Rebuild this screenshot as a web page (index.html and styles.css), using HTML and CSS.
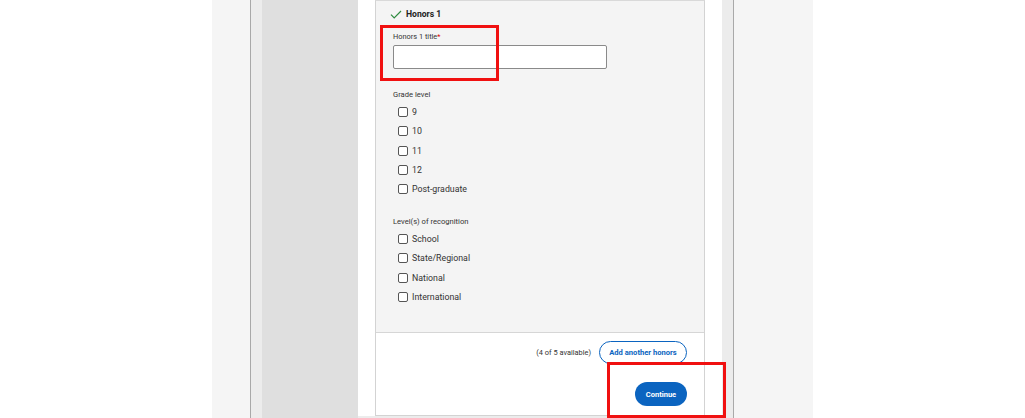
FILE: index.html
```html
<!DOCTYPE html>
<html>
<head>
<meta charset="utf-8">
<link rel="stylesheet" href="styles.css">
</head>
<body>
<div class="page">
  <div class="col margin-l"></div>
  <div class="col gutter-l"></div>
  <div class="col vline"></div>
  <div class="col band-l"></div>
  <div class="col side"></div>
  <div class="col main">
    <div class="panel">
      <div class="panel-body">
        <div class="panel-head">
          <svg class="check" width="12" height="9" viewBox="0 0 12 9"><path d="M1 4.6 L4.2 7.8 L11 1" fill="none" stroke="#2e8b3f" stroke-width="1.2"/></svg>
          <span>Honors 1</span>
        </div>
        <div class="field-label">Honors 1 title<span class="req">*</span></div>
        <div class="text-input"></div>
        <div class="group-label first-group">Grade level</div>
        <div class="options">
          <div class="opt"><span class="box"></span><span>9</span></div>
          <div class="opt"><span class="box"></span><span>10</span></div>
          <div class="opt"><span class="box"></span><span>11</span></div>
          <div class="opt"><span class="box"></span><span>12</span></div>
          <div class="opt"><span class="box"></span><span>Post-graduate</span></div>
        </div>
        <div class="group-label second-group">Level(s) of recognition</div>
        <div class="options">
          <div class="opt"><span class="box"></span><span>School</span></div>
          <div class="opt"><span class="box"></span><span>State/Regional</span></div>
          <div class="opt"><span class="box"></span><span>National</span></div>
          <div class="opt"><span class="box"></span><span>International</span></div>
        </div>
      </div>
      <div class="panel-foot">
        <div class="foot-row">
          <span class="avail">(4 of 5 available)</span>
          <span class="btn-outline">Add another honors</span>
        </div>
        <div class="foot-row continue-row">
          <span class="btn-fill">Continue</span>
        </div>
      </div>
    </div>
    <div class="below"></div>
  </div>
  <div class="col band-r"></div>
  <div class="col vline"></div>
  <div class="col gutter-r"></div>
  <div class="col margin-r"></div>

  <div class="mark mark-title"></div>
  <div class="mark mark-continue"></div>
</div>
</body>
</html>
```

FILE: styles.css
```css
* { box-sizing: border-box; }
html, body { margin: 0; padding: 0; background: #fff; }
body { font-family: Roboto, "Liberation Sans", Arial, sans-serif; color: #222; }

.page {
  position: relative;
  display: flex;
  width: 1025px;
  height: 418px;
  overflow: hidden;
}
.col { height: 100%; flex: none; }
.margin-l { width: 212px; background: #fff; }
.gutter-l { width: 38px; background: #f5f5f5; }
.vline { width: 1px; background: #a9a9a9; }
.band-l { width: 11px; background: #ececec; }
.side { width: 96px; background: #dfdfdf; }
.main {
  width: 364px;
  background: #fff;
  padding: 0 17px;
  display: flex;
  flex-direction: column;
}
.band-r { width: 11px; background: #ececec; }
.gutter-r { width: 79px; background: #f5f5f5; }
.margin-r { flex: 1; background: #fff; }

.panel {
  width: 330px;
  border: 1px solid #d3d3d3;
  border-top-color: #d9d9d9;
  display: flex;
  flex-direction: column;
}
.panel-body {
  height: 331px;
  background: #f4f4f4;
  padding: 7px 0 0 17px;
  display: flex;
  flex-direction: column;
}
.panel-head {
  display: flex;
  align-items: center;
  height: 12px;
  font-size: 8.6px;
  font-weight: 700;
  color: #222;
}
.check { margin-left: -3px; margin-right: 4px; }
.field-label {
  margin-top: 12px;
  height: 10px;
  line-height: 10px;
  font-size: 7.4px;
  color: #333;
}
.req { color: #d00; }
.text-input {
  margin-top: 3px;
  width: 214px;
  height: 24px;
  background: #fff;
  border: 1px solid #8a8a8a;
  border-radius: 2px;
}
.group-label {
  height: 10px;
  line-height: 10px;
  font-size: 7.6px;
  color: #333;
}
.first-group { margin-top: 21px; }
.second-group { margin-top: 18.4px; }
.options { margin-top: 2.4px; padding-left: 5px; }
.opt {
  display: flex;
  align-items: center;
  height: 19.25px;
  font-size: 8.8px;
  color: #333;
}
.box {
  width: 10px;
  height: 10px;
  border: 1px solid #555;
  border-radius: 2px;
  background: #fff;
  margin-right: 4px;
  flex: none;
}

.panel-foot {
  flex: 1;
  background: #fff;
  border-top: 1px solid #d6d6d6;
  padding: 8px 17px 9px 0;
  display: flex;
  flex-direction: column;
  align-items: flex-end;
}
.foot-row {
  display: flex;
  align-items: center;
  justify-content: flex-end;
}
.avail {
  font-size: 7.4px;
  color: #333;
  margin-right: 8px;
}
.btn-outline {
  display: flex;
  align-items: center;
  justify-content: center;
  width: 88px;
  height: 23px;
  border: 1px solid #0b64c0;
  border-radius: 12px;
  font-size: 7.6px;
  font-weight: 700;
  color: #0b64c0;
  background: #fff;
}
.continue-row { margin-top: 18px; }
.btn-fill {
  display: flex;
  align-items: center;
  justify-content: center;
  width: 52px;
  height: 24px;
  border-radius: 12px;
  background: #0b64c0;
  color: #fff;
  font-size: 7.5px;
  font-weight: 700;
}
.below { flex: 1; background: #ececec; margin: 0 -17px; }

.mark {
  position: absolute;
  border: 3px solid #f01010;
}
.mark-title { left: 380px; top: 25px; width: 119px; height: 56px; }
.mark-continue { left: 607px; top: 362px; width: 119px; height: 56px; }
```
